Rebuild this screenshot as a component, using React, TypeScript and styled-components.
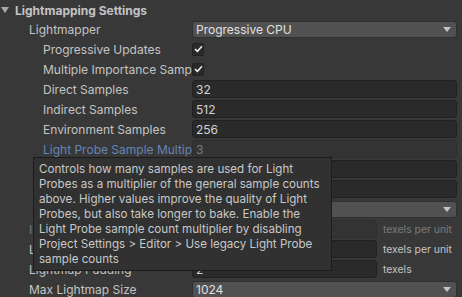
import React from "react";
import styled, { createGlobalStyle } from "styled-components";

const GlobalStyle = createGlobalStyle`
    html, body {
        margin: 0;
        padding: 0;
        background: #383838;
    }
    body {
        font-family: Inter, "Noto Sans", sans-serif;
        font-size: 12px;
        color: #c4c4c4;
    }
`;

const Panel = styled.div`
    position: relative;
    width: 462px;
    height: 297px;
    overflow: hidden;
    background: #383838;
`;

const Header = styled.div`
    height: 20px;
    display: flex;
    align-items: center;
    padding-left: 1px;
    gap: 6px;
    font-weight: bold;
    color: #c4c4c4;
`;

const Row = styled.div`
    height: 18px;
    margin-bottom: 2px;
    display: flex;
    align-items: center;
    padding-right: 5px;
`;

const Label = styled.div<{ $indent: number; $color?: string }>`
    width: 192px;
    flex: none;
    box-sizing: border-box;
    padding-left: ${(p) => 29 + (p.$indent - 1) * 14}px;
    white-space: nowrap;
    overflow: hidden;
    color: ${(p) => p.$color || "#c4c4c4"};
`;

const Dropdown = styled.div`
    flex: 1;
    height: 17px;
    box-sizing: border-box;
    background: #515151;
    border: 1px solid #303030;
    border-radius: 3px;
    display: flex;
    align-items: center;
    justify-content: space-between;
    padding: 0 5px 0 3px;
    color: #e0e0e0;
`;

const Arrow = styled.div`
    width: 0;
    height: 0;
    border-left: 4px solid transparent;
    border-right: 4px solid transparent;
    border-top: 5px solid #c4c4c4;
`;

const Field = styled.div<{ $disabled?: boolean }>`
    flex: 1;
    height: 18px;
    box-sizing: border-box;
    background: ${(p) => (p.$disabled ? "#333333" : "#2a2a2a")};
    border: 1px solid ${(p) => (p.$disabled ? "#2e2e2e" : "#212121")};
    border-radius: 3px;
    display: flex;
    align-items: center;
    padding-left: 3px;
    color: ${(p) => (p.$disabled ? "#7d7d7d" : "#d2d2d2")};
`;

const UnitField = styled(Field)`
    flex: none;
    width: 185px;
`;

const Unit = styled.span<{ $dim?: boolean }>`
    margin-left: 6px;
    white-space: nowrap;
    font-size: 10.4px;
    color: ${(p) => (p.$dim ? "#7a7a7a" : "#c4c4c4")};
`;

const Check = styled.div`
    width: 12px;
    height: 13px;
    box-sizing: border-box;
    background: #2a2a2a;
    border: 1px solid #212121;
    border-radius: 2px;
    display: flex;
    align-items: center;
    justify-content: center;
`;

const Tooltip = styled.div`
    position: absolute;
    left: 33px;
    top: 157px;
    width: 299px;
    height: 114px;
    box-sizing: border-box;
    background: #313131;
    border: 1px solid #1c1c1c;
    padding: 4px 0 0 5px;
    font-size: 11.6px;
    line-height: 15px;
    color: #c8c8c8;
`;

const TipLine = styled.div`
    white-space: nowrap;
`;

const Checkbox = () => (
    <Check>
        <svg width="9" height="8" viewBox="0 0 9 8">
            <path d="M1 4.2 L3.4 6.4 L8 1.3" fill="none" stroke="#e8e8e8" strokeWidth="1.6" />
        </svg>
    </Check>
);

const tipLines = [
    "Controls how many samples are used for Light",
    "Probes as a multiplier of the general sample counts",
    "above. Higher values improve the quality of Light",
    "Probes, but also take longer to bake. Enable the",
    "Light Probe sample count multiplier by disabling",
    "Project Settings > Editor > Use legacy Light Probe",
    "sample counts",
];

export default function App() {
    return (
        <Panel>
            <GlobalStyle />
            <Header>
                <svg width="8" height="6" viewBox="0 0 8 6">
                    <path d="M0 0 H8 L4 6 Z" fill="#a8a8a8" />
                </svg>
                <span>Lightmapping Settings</span>
            </Header>
            <Row>
                <Label $indent={1}>Lightmapper</Label>
                <Dropdown>
                    Progressive CPU
                    <Arrow />
                </Dropdown>
            </Row>
            <Row>
                <Label $indent={2}>Progressive Updates</Label>
                <Checkbox />
            </Row>
            <Row>
                <Label $indent={2}>Multiple Importance Sampling</Label>
                <Checkbox />
            </Row>
            <Row>
                <Label $indent={2}>Direct Samples</Label>
                <Field>32</Field>
            </Row>
            <Row>
                <Label $indent={2}>Indirect Samples</Label>
                <Field>512</Field>
            </Row>
            <Row>
                <Label $indent={2}>Environment Samples</Label>
                <Field>256</Field>
            </Row>
            <Row>
                <Label $indent={2} $color="#6485b5">
                    Light Probe Sample Multiplier
                </Label>
                <Field $disabled>3</Field>
            </Row>
            <Row>
                <Label $indent={2}>Min Bounces</Label>
                <Field>2</Field>
            </Row>
            <Row>
                <Label $indent={2}>Max Bounces</Label>
                <Field>2</Field>
            </Row>
            <Row>
                <Label $indent={2}>Filtering</Label>
                <Dropdown>
                    Auto
                    <Arrow />
                </Dropdown>
            </Row>
            <Row>
                <Label $indent={1} $color="#7a7a7a">
                    Indirect Resolution
                </Label>
                <UnitField $disabled>2</UnitField>
                <Unit $dim>texels per unit</Unit>
            </Row>
            <Row>
                <Label $indent={1}>Lightmap Resolution</Label>
                <UnitField>40</UnitField>
                <Unit>texels per unit</Unit>
            </Row>
            <Row>
                <Label $indent={1}>Lightmap Padding</Label>
                <UnitField>2</UnitField>
                <Unit>texels</Unit>
            </Row>
            <Row>
                <Label $indent={1}>Max Lightmap Size</Label>
                <Dropdown>
                    1024
                    <Arrow />
                </Dropdown>
            </Row>
            <Tooltip>
                {tipLines.map((line) => (
                    <TipLine key={line}>{line}</TipLine>
                ))}
            </Tooltip>
        </Panel>
    );
}
